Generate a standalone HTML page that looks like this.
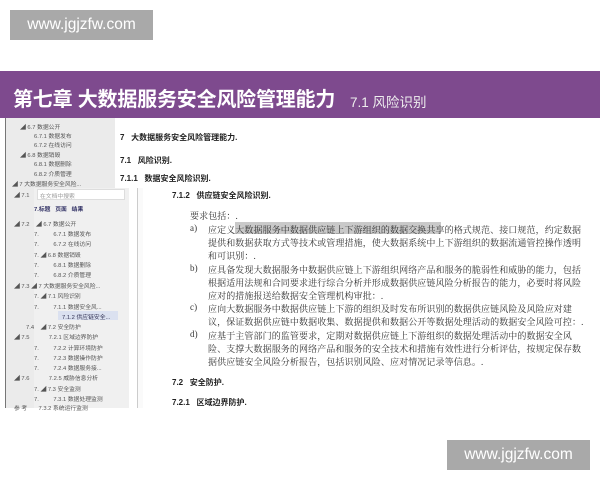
<!DOCTYPE html>
<html><head><meta charset="utf-8"><style>
*{margin:0;padding:0;box-sizing:border-box}
body{width:600px;height:480px;background:#fff;position:relative;overflow:hidden;font-family:"Liberation Sans","Noto Sans CJK SC",sans-serif}
.wm{position:absolute;background:#a9a9a9;color:#fff;font-size:15.5px;text-align:center;line-height:30px;width:143px;height:30px}
.ban{position:absolute;left:0;top:71px;width:600px;height:47px;background:#7e4a8e}
.t{position:absolute;white-space:nowrap}
.tr{position:absolute;white-space:nowrap;font-size:5.8px;color:#555}
.h{font-size:8px;color:#222;font-weight:bold}
.p{position:absolute;white-space:nowrap;font-family:"Liberation Serif","Noto Serif CJK SC",serif;font-size:9px;letter-spacing:0.1px;color:#333;left:208px}
</style></head><body>
<div class="wm" style="left:10px;top:10px">www.jgjzfw.com</div>
<div class="wm" style="left:447px;top:440px">www.jgjzfw.com</div>
<div class="ban"></div>
<div class="t" style="left:13px;top:83px;font-size:20px;font-weight:bold;color:#fff;letter-spacing:-0.2px">第七章 大数据服务安全风险管理能力</div>
<div class="t" style="left:350px;top:91px;font-size:13.5px;color:#eee">7.1 风险识别</div>
<div style="position:absolute;left:5px;top:118px;width:110px;height:290px;background:#ebebeb;border-left:1px solid #777"></div>
<div style="position:absolute;left:34px;top:188px;width:95px;height:220px;background:#f0f0f0"></div>
<div style="position:absolute;left:37px;top:189px;width:88px;height:11px;background:#fff;border:1px solid #ddd"></div>
<div style="position:absolute;left:137px;top:188px;width:6px;height:220px;background:#fafafa;border-left:1px solid #ccc"></div>
<div style="position:absolute;left:58px;top:311px;width:60px;height:9px;background:#dbe1f0"></div>
<div class="tr" style="left:20px;top:122px">◢ 6.7 数据公开</div>
<div class="tr" style="left:34px;top:131px">6.7.1 数据发布</div>
<div class="tr" style="left:34px;top:140px">6.7.2 在线访问</div>
<div class="tr" style="left:20px;top:150px">◢ 6.8 数据销毁</div>
<div class="tr" style="left:34px;top:159px">6.8.1 数据删除</div>
<div class="tr" style="left:34px;top:169px">6.8.2 介质管理</div>
<div class="tr" style="left:12px;top:179px">◢ 7 大数据服务安全风险...</div>
<div class="tr" style="left:14px;top:190px">◢ 7.1</div>
<div class="tr" style="left:40px;top:191px;color:#999">在文档中搜索</div>
<div class="tr" style="left:34px;top:204px;color:#336;font-weight:bold">7.标题 &nbsp;&nbsp;页面 &nbsp;&nbsp;结果</div>
<div class="tr" style="left:14px;top:219px">◢ 7.2 &nbsp;&nbsp;&nbsp;◢ 6.7 数据公开</div>
<div class="tr" style="left:34px;top:229px">7. &nbsp;&nbsp;&nbsp;&nbsp;&nbsp;&nbsp;&nbsp;&nbsp;6.7.1 数据发布</div>
<div class="tr" style="left:34px;top:239px">7. &nbsp;&nbsp;&nbsp;&nbsp;&nbsp;&nbsp;&nbsp;&nbsp;6.7.2 在线访问</div>
<div class="tr" style="left:34px;top:250px">7. ◢ 6.8 数据销毁</div>
<div class="tr" style="left:34px;top:260px">7. &nbsp;&nbsp;&nbsp;&nbsp;&nbsp;&nbsp;&nbsp;&nbsp;6.8.1 数据删除</div>
<div class="tr" style="left:34px;top:270px">7. &nbsp;&nbsp;&nbsp;&nbsp;&nbsp;&nbsp;&nbsp;&nbsp;6.8.2 介质管理</div>
<div class="tr" style="left:14px;top:281px">◢ 7.3 ◢ 7 大数据服务安全风险...</div>
<div class="tr" style="left:34px;top:291px">7. ◢ 7.1 风险识别</div>
<div class="tr" style="left:34px;top:302px">7. &nbsp;&nbsp;&nbsp;&nbsp;&nbsp;&nbsp;&nbsp;&nbsp;7.1.1 数据安全风...</div>
<div class="tr" style="left:62px;top:312px;color:#335">7.1.2 供应链安全...</div>
<div class="tr" style="left:26px;top:322px">7.4 &nbsp;&nbsp;&nbsp;◢ 7.2 安全防护</div>
<div class="tr" style="left:14px;top:332px">◢ 7.5 &nbsp;&nbsp;&nbsp;&nbsp;&nbsp;&nbsp;&nbsp;&nbsp;&nbsp;&nbsp;&nbsp;7.2.1 区域边界防护</div>
<div class="tr" style="left:34px;top:343px">7. &nbsp;&nbsp;&nbsp;&nbsp;&nbsp;&nbsp;&nbsp;&nbsp;7.2.2 计算环境防护</div>
<div class="tr" style="left:34px;top:353px">7. &nbsp;&nbsp;&nbsp;&nbsp;&nbsp;&nbsp;&nbsp;&nbsp;7.2.3 数据操作防护</div>
<div class="tr" style="left:34px;top:363px">7. &nbsp;&nbsp;&nbsp;&nbsp;&nbsp;&nbsp;&nbsp;&nbsp;7.2.4 数据服务接...</div>
<div class="tr" style="left:14px;top:373px">◢ 7.6 &nbsp;&nbsp;&nbsp;&nbsp;&nbsp;&nbsp;&nbsp;&nbsp;&nbsp;&nbsp;&nbsp;7.2.5 威胁信息分析</div>
<div class="tr" style="left:34px;top:384px">7. ◢ 7.3 安全监测</div>
<div class="tr" style="left:34px;top:394px">7. &nbsp;&nbsp;&nbsp;&nbsp;&nbsp;&nbsp;&nbsp;&nbsp;7.3.1 数据处理监测</div>
<div class="tr" style="left:14px;top:403px">参 考 &nbsp;&nbsp;&nbsp;&nbsp;&nbsp;&nbsp;7.3.2 系统运行监测</div>
<div class="t h" style="left:120px;top:132px">7&nbsp;&nbsp;&nbsp;大数据服务安全风险管理能力.</div>
<div class="t h" style="left:120px;top:155px">7.1&nbsp;&nbsp;&nbsp;风险识别.</div>
<div class="t h" style="left:120px;top:173px">7.1.1&nbsp;&nbsp;&nbsp;数据安全风险识别.</div>
<div class="t h" style="left:172px;top:190px">7.1.2&nbsp;&nbsp;&nbsp;供应链安全风险识别.</div>
<div class="p" style="left:190px;top:209px">要求包括：.</div>
<div style="position:absolute;left:235px;top:222px;width:206px;height:12px;background:#c9c9c9"></div>
<div class="p" style="left:190px;top:223px">a)</div>
<div class="p" style="top:223px">应定义大数据服务中数据供应链上下游组织的数据交换共享的格式规范、接口规范，约定数据</div>
<div class="p" style="top:236px">提供和数据获取方式等技术或管理措施，使大数据系统中上下游组织的数据流通管控操作透明</div>
<div class="p" style="top:249px">和可识别：.</div>
<div class="p" style="left:190px;top:263px">b)</div>
<div class="p" style="top:263px">应具备发现大数据服务中数据供应链上下游组织网络产品和服务的脆弱性和威胁的能力，包括</div>
<div class="p" style="top:276px">根据适用法规和合同要求进行综合分析并形成数据供应链风险分析报告的能力，必要时将风险</div>
<div class="p" style="top:289px">应对的措施报送给数据安全管理机构审批：.</div>
<div class="p" style="left:190px;top:302px">c)</div>
<div class="p" style="top:302px">应向大数据服务中数据供应链上下游的组织及时发布所识别的数据供应链风险及风险应对建</div>
<div class="p" style="top:315px">议，保证数据供应链中数据收集、数据提供和数据公开等数据处理活动的数据安全风险可控：.</div>
<div class="p" style="left:190px;top:329px">d)</div>
<div class="p" style="top:329px">应基于主管部门的监管要求，定期对数据供应链上下游组织的数据处理活动中的数据安全风</div>
<div class="p" style="top:342px">险、支撑大数据服务的网络产品和服务的安全技术和措施有效性进行分析评估，按规定保存数</div>
<div class="p" style="top:355px">据供应链安全风险分析报告，包括识别风险、应对情况记录等信息。.</div>
<div class="t h" style="left:172px;top:377px">7.2&nbsp;&nbsp;&nbsp;安全防护.</div>
<div class="t h" style="left:172px;top:397px">7.2.1&nbsp;&nbsp;&nbsp;区域边界防护.</div>
</body></html>
